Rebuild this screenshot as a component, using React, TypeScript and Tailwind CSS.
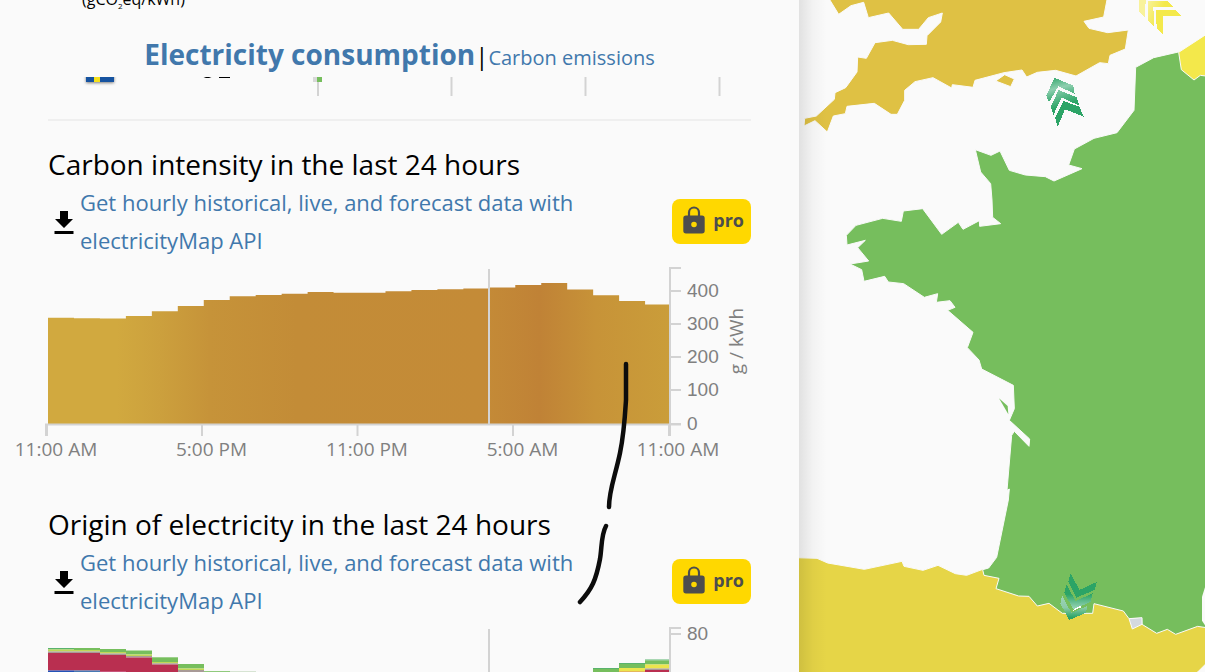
import React from 'react';

interface Layer {
  color: string;
  // top edge and bottom edge of the layer for one hour
  top: number;
  bottom: number;
}

interface Tick {
  label: string;
  y: number;
}

const COLUMN_WIDTH = 25.96;
const CHART_LEFT = 48;
const CHART_RIGHT = 670;

const carbonTops = [
  57.7, 58.2, 58.4, 56, 51.2, 46, 40, 36.3, 35, 33.8, 32, 32.8, 32.8, 31.3, 30, 29.2, 28.6, 27.6,
  25, 23, 29.5, 35.3, 41, 44.5,
];

const carbonTicks: Tick[] = [
  { label: '400', y: 31 },
  { label: '300', y: 64 },
  { label: '200', y: 97 },
  { label: '100', y: 130 },
  { label: '0', y: 164 },
];

const timeLabels = ['11:00 AM', '5:00 PM', '11:00 PM', '5:00 AM', '11:00 AM'];

const GREEN = '#76be5d';
const TEAL = '#59b36c';
const LIME = '#bfd756';
const YELLOW = '#ece54d';
const GREY = '#a89a97';
const RED = '#b92f50';

const originColumns: { hour: number; layers: Layer[] }[] = [
  { hour: 0, layers: [{ color: TEAL, top: 28, bottom: 29.5 }, { color: LIME, top: 29.5, bottom: 31.5 }, { color: GREY, top: 31.5, bottom: 33 }, { color: RED, top: 33, bottom: 50.5 }, { color: '#2353b8', top: 50.5, bottom: 60 }] },
  { hour: 1, layers: [{ color: GREEN, top: 28, bottom: 30 }, { color: LIME, top: 30, bottom: 31.5 }, { color: GREY, top: 31.5, bottom: 33 }, { color: RED, top: 33, bottom: 50.5 }, { color: '#4779b4', top: 50.5, bottom: 60 }] },
  { hour: 2, layers: [{ color: GREEN, top: 29, bottom: 32 }, { color: LIME, top: 32, bottom: 33.5 }, { color: GREY, top: 33.5, bottom: 35 }, { color: RED, top: 35, bottom: 51 }, { color: '#c8547a', top: 51, bottom: 60 }] },
  { hour: 3, layers: [{ color: GREEN, top: 30.5, bottom: 34.5 }, { color: LIME, top: 34.5, bottom: 36 }, { color: GREY, top: 36, bottom: 37.5 }, { color: RED, top: 37.5, bottom: 60 }] },
  { hour: 4, layers: [{ color: GREEN, top: 37.3, bottom: 42 }, { color: LIME, top: 42, bottom: 43.3 }, { color: GREY, top: 43.3, bottom: 44.5 }, { color: RED, top: 44.5, bottom: 60 }] },
  { hour: 5, layers: [{ color: GREEN, top: 44, bottom: 48.5 }, { color: LIME, top: 48.5, bottom: 50 }, { color: GREY, top: 50, bottom: 60 }] },
  { hour: 6, layers: [{ color: GREEN, top: 51.2, bottom: 60 }] },
  { hour: 7, layers: [{ color: '#cfdfca', top: 51.2, bottom: 60 }] },
  { hour: 21, layers: [{ color: TEAL, top: 48, bottom: 49 }, { color: GREEN, top: 49, bottom: 60 }] },
  { hour: 22, layers: [{ color: TEAL, top: 43, bottom: 44 }, { color: GREEN, top: 44, bottom: 48 }, { color: YELLOW, top: 48, bottom: 51 }, { color: '#e5b75c', top: 51, bottom: 60 }] },
  { hour: 23, layers: [{ color: TEAL, top: 39.5, bottom: 40.5 }, { color: GREEN, top: 40.5, bottom: 44.5 }, { color: YELLOW, top: 44.5, bottom: 48.5 }, { color: GREY, top: 48.5, bottom: 50 }, { color: RED, top: 50, bottom: 60 }] },
];

const PageTabs: React.FC = () => (
  <nav className="flex h-[53px] items-baseline justify-center pt-[11px] leading-[38px]">
    <button type="button" className="text-[28px] font-bold text-[#4178ac]">
      Electricity consumption
    </button>
    <span className="text-2xl leading-[38px] text-black">|</span>
    <button type="button" className="text-xl text-[#4178ac]">
      Carbon emissions
    </button>
  </nav>
);

const CountryRow: React.FC = () => (
  <svg viewBox="0 0 799 42" className="block w-full overflow-hidden" aria-hidden="true">
    <defs>
      <filter id="flagShadow" x="-20%" y="-50%" width="140%" height="250%">
        <feDropShadow dx="0" dy="1" stdDeviation="1.5" floodOpacity="0.5" />
      </filter>
    </defs>
    <g filter="url(#flagShadow)">
      <rect x="86" y="-12" width="28" height="17" fill="#1552a0" />
      <rect x="94" y="-12" width="6" height="17" fill="#f5e11c" />
    </g>
    <path d="M203.500 0H211.500L209 1H206ZM219 0H230V1H219Z" fill="#000" />
    <rect x="313" y="0" width="4" height="5" fill="#d8d8d8" />
    <path d="M318 0V19M451.500 0V19M585.500 0V19M719.500 0V19" stroke="#d3d3d3" strokeWidth="2" />
    <rect x="317" y="0" width="5" height="5" fill={GREEN} />
  </svg>
);

const DownloadIcon: React.FC = () => (
  <svg viewBox="0 0 20 24" className="mt-1 h-6 w-5 shrink-0" aria-hidden="true">
    <path d="M6 0h8v8h5l-9 9-9-9h5zM0.500 20h19v3h-19z" fill="#000" />
  </svg>
);

const ProBadge: React.FC = () => (
  <span className="flex h-[45px] shrink-0 items-center gap-2 rounded-lg bg-[#ffd800] pb-[2px] pl-[11px] pr-[7px] text-lg font-bold leading-6 text-[#4d4d4d]">
    <svg viewBox="0 0 22 28" className="h-7 w-[22px]" aria-hidden="true">
      <path d="M6 11V6.500a5 5 0 0 1 10 0V11" fill="none" stroke="#4d4d4d" strokeWidth="2.200" />
      <path
        fillRule="evenodd"
        fill="#4d4d4d"
        d="M3 9.500h16a2.700 2.700 0 0 1 2.700 2.700v12.600a2.700 2.700 0 0 1-2.700 2.700H3a2.700 2.700 0 0 1-2.700-2.700V12.200A2.700 2.700 0 0 1 3 9.500zM11 15.700a2.800 2.800 0 1 0 0 5.600 2.800 2.800 0 0 0 0-5.600z"
      />
    </svg>
    pro
  </span>
);

interface HistorySectionProps {
  title: string;
  children: React.ReactNode;
}

const HistorySection: React.FC<HistorySectionProps> = ({ title, children }) => (
  <section>
    <h2 className="px-12 text-[28px] leading-[38px] text-black">{title}</h2>
    <div className="flex items-center justify-between px-12">
      <div className="flex items-center gap-[6px] pl-[6px]">
        <DownloadIcon />
        <a href="#api" className="max-w-[510px] text-[22px] leading-[38px] text-[#4178ac]">
          Get hourly historical, live, and forecast data with electricityMap API
        </a>
      </div>
      <ProBadge />
    </div>
    {children}
  </section>
);

const CarbonChart: React.FC = () => (
  <svg viewBox="0 -1 799 210" className="block w-full" role="img" aria-label="Carbon intensity">
    <defs>
      <linearGradient id="carbonFill" gradientUnits="userSpaceOnUse" x1="48" y1="0" x2="670" y2="0">
        <stop offset="0" stopColor="#d1a93f" />
        <stop offset="0.11" stopColor="#d1a93f" />
        <stop offset="0.18" stopColor="#cca03d" />
        <stop offset="0.26" stopColor="#c69339" />
        <stop offset="0.4" stopColor="#c38c37" />
        <stop offset="0.7" stopColor="#c48b37" />
        <stop offset="0.79" stopColor="#c08236" />
        <stop offset="0.88" stopColor="#c79338" />
        <stop offset="1" stopColor="#ca9d3a" />
      </linearGradient>
    </defs>
    <path
      fill="url(#carbonFill)"
      d={`M${CHART_LEFT} 164${carbonTops
        .map((top, i) => `V${top}H${Math.min(CHART_LEFT + (i + 1) * COLUMN_WIDTH, CHART_RIGHT)}`)
        .join('')}V164Z`}
    />
    <path d="M489 9V164" stroke="#d3d3d3" strokeWidth="2" />
    <path d="M681 8H670V164M45 164.500H681" fill="none" stroke="#d3d3d3" strokeWidth="2" />
    <path d="M46.500 164V176M669.500 164V176" stroke="#d3d3d3" strokeWidth="3" />
    <path d="M202 164V176M357.500 164V176M513 164V176" stroke="#d3d3d3" strokeWidth="2" />
    {carbonTicks.map((tick) => (
      <g key={tick.label}>
        <path d={`M670 ${tick.y}H681`} stroke="#d3d3d3" strokeWidth="2" />
        <text x="687" y={tick.y + 6} className="fill-[#808080] font-['Liberation_Sans',sans-serif] text-[19px]">
          {tick.label}
        </text>
      </g>
    ))}
    <text transform="translate(743 81) rotate(-90)" textAnchor="middle" className="fill-[#808080] text-[19px]">
      g / kWh
    </text>
    {timeLabels.map((label, i) => (
      <text key={i} x={56 + i * 155.5} y="196" textAnchor="middle" className="fill-[#808080] text-[19px]">
        {label}
      </text>
    ))}
  </svg>
);

const OriginChart: React.FC = () => (
  <svg viewBox="0 -1 799 53" className="block w-full" role="img" aria-label="Origin of electricity">
    {originColumns.map((column) =>
      column.layers.map((layer, i) => (
        <rect
          key={`${column.hour}-${i}`}
          x={Math.round(CHART_LEFT + column.hour * COLUMN_WIDTH)}
          y={layer.top}
          width={column.hour === 23 ? 25 : 26}
          height={layer.bottom - layer.top}
          fill={layer.color}
        />
      )),
    )}
    <path d="M489 9V60" stroke="#d3d3d3" strokeWidth="2" />
    <path d="M681 8H670V60M670 14H681" fill="none" stroke="#d3d3d3" strokeWidth="2" />
    <text x="687" y="20" className="fill-[#808080] font-['Liberation_Sans',sans-serif] text-[19px]">
      80
    </text>
  </svg>
);

const FlowArrows: React.FC = () => (
  <g shapeRendering="crispEdges">
    <path d="M778 233L835 257L839 281L790 259L762 307L754 287Z" fill="url(#flowLight)" />
    <path d="M791 270L845 292L853 317L800 293L775 345L767 320Z" fill="url(#flowMid)" />
    <path d="M805 303L853 320L866 350L810 328L788 380L780 353Z" fill="#2ca466" />

    <path d="M1032 0H1054L1050 20V53L1033 35Z" fill="#f8f29b" />
    <path d="M1058 3H1118L1136 21H1075L1078 82L1060 63Z" fill="url(#flowYellow)" />
    <path d="M1083 29H1140L1160 47H1103L1104 104L1085 84Z" fill="#f4e94b" />

    <path d="M827 1719L853 1770L905 1746L899 1770L844 1793L820 1745Z" fill="#2ca466" />
    <path d="M814 1753L842 1803L893 1780L887 1806L834 1828L808 1777Z" fill="url(#flowDown)" />
    <path d="M833 1830L858 1816V1822L836 1832Z" fill="#fff" />
    <path d="M801 1785L829 1839L878 1817L872 1839L823 1860L796 1811Z" fill="url(#flowDownLight)" />
  </g>
);

const CountryMap: React.FC = () => (
  <svg viewBox="12 0 1218 2016" preserveAspectRatio="xMinYMin slice" className="h-full w-full" role="img" aria-label="Map of Western Europe">
    <defs>
      <linearGradient id="flowLight" x1="0" y1="0" x2="0.3" y2="1">
        <stop offset="0" stopColor="#2ca466" />
        <stop offset="0.5" stopColor="#8fcfb0" />
        <stop offset="1" stopColor="#2ca466" />
      </linearGradient>
      <linearGradient id="flowMid" x1="0" y1="0" x2="0.4" y2="1">
        <stop offset="0" stopColor="#8fcfb0" />
        <stop offset="0.7" stopColor="#2ca466" />
      </linearGradient>
      <linearGradient id="flowYellow" x1="0" y1="0" x2="1" y2="0.4">
        <stop offset="0" stopColor="#f8f29b" />
        <stop offset="0.6" stopColor="#f4e94b" />
      </linearGradient>
      <linearGradient id="flowDown" x1="0.3" y1="0" x2="0.3" y2="1">
        <stop offset="0.4" stopColor="#2ca466" />
        <stop offset="1" stopColor="#9ed6ba" />
      </linearGradient>
      <linearGradient id="flowDownLight" x1="0.3" y1="0" x2="0.3" y2="1">
        <stop offset="0" stopColor="#9ed6ba" />
        <stop offset="0.5" stopColor="#8ccba7" />
        <stop offset="0.9" stopColor="#2ca466" />
      </linearGradient>
    </defs>
    <g stroke="#fafafa" strokeWidth="3" strokeLinejoin="round">
      {/* Great Britain and the Isle of Wight */}
      <path
        fill="#dfc144"
        d="M101 -6L131 43L168 17L206 7L220 53L281 39L323 88L371 88L400 53L442 39L437 66L396 107L394 133L340 134L292 121L240 128L214 175L188 171L186 216L152 263L120 278L118 298L64 348L29 355L27 378L60 362L97 396L115 348L151 341L156 319L238 310L288 343L307 343L329 301L329 271L360 245L414 233L470 264L472 254L534 262L540 241L627 218L681 210L695 231L727 217L782 211L843 228L914 188L940 191L945 166L991 147L1000 90L938 98L882 85L867 64L926 51L937 -6Z"
      />
      <path fill="#dfc144" d="M602 243L629 224L658 237L647 260Z" />
      {/* Spain */}
      <path
        fill="#e6d547"
        d="M0 1673L66 1675L98 1689L208 1708L321 1684L327 1699L384 1711L429 1696L481 1721L515 1726L563 1708L700 1700H1240V1984L1208 2016L1190 2030H0Z"
      />
      {/* France */}
      <path
        fill="#76be5d"
        d="M1240 150L1150 156L1076 173L1022 202L1017 331L966 398L897 415L838 447L821 495L861 506L777 543L751 530L691 525L643 511L615 453L588 466L541 449L557 516L587 551L591 600L593 652L617 671L554 679L553 662L504 688L490 667L440 703L383 626L325 633L319 664L263 655L183 676L154 706L156 735L211 721L188 743L221 783L165 792L200 809L207 844L269 829L280 846L326 851L388 892L428 881L424 907L465 902L480 922L458 931L534 997L517 1043L552 1080L560 1107L655 1156L658 1226L643 1261L704 1317L702 1339L658 1294L650 1306L636 1471L643 1467L640 1500L605 1672L581 1704L563 1709L567 1726L612 1735L603 1766L671 1788L702 1789L727 1818L762 1810L802 1840L893 1840L897 1811L985 1833L1002 1856L1040 1855L1041 1873L1085 1900L1117 1888L1142 1903L1208 1879L1240 1884Z"
      />
      <path fill="#76be5d" stroke="none" d="M612 1195L638 1218L640 1243Z" />
      <path fill="#d4d9df" d="M1002 1856L1041 1853V1873L1012 1887Z" />
      <path fill="#f3e84b" d="M1240 99L1151 157L1159 209L1197 240L1216 226L1240 229Z" />
      <path fill="#fafafa" stroke="none" d="M1230 1762L1221 1790V1862L1230 1876Z" />
    </g>
    <FlowArrows />
  </svg>
);

const PenMarks: React.FC = () => (
  <svg viewBox="0 0 60 250" className="pointer-events-none absolute left-[575px] top-[358px] h-[250px] w-[60px]" aria-hidden="true">
    <path
      d="M51 6V42C50 58 49 76 45 95C40 119 34 132 34 149M31 168C26 177 27 189 25 201C21 222 17 231 5 244"
      fill="none"
      stroke="#0c0c0c"
      strokeWidth="4.500"
      strokeLinecap="round"
      strokeLinejoin="round"
    />
  </svg>
);

const App: React.FC = () => {
  return (
    <div className="relative flex h-screen overflow-hidden bg-[#fafafa] font-['Open_Sans',sans-serif]">
      <aside className="w-2/3 max-w-[799px] shrink-0 overflow-hidden">
        <p className="-mt-3 h-9 pl-[82px] text-base leading-[22px] text-black">
          (gCO<sub className="-bottom-1 text-[8px]">2</sub>eq/kWh)
        </p>
        <PageTabs />
        <CountryRow />
        <hr className="mx-12 mb-6 border-t-2 border-[#efefef]" />
        <div className="flex flex-col gap-9">
          <HistorySection title="Carbon intensity in the last 24 hours">
            <CarbonChart />
          </HistorySection>
          <HistorySection title="Origin of electricity in the last 24 hours">
            <OriginChart />
          </HistorySection>
        </div>
      </aside>
      <main className="relative min-w-0 flex-1 overflow-hidden">
        <CountryMap />
        <div className="pointer-events-none absolute inset-y-0 left-0 w-7 bg-linear-to-r from-black/10 via-black/3 to-transparent" />
      </main>
      <PenMarks />
    </div>
  );
};

export default App;
